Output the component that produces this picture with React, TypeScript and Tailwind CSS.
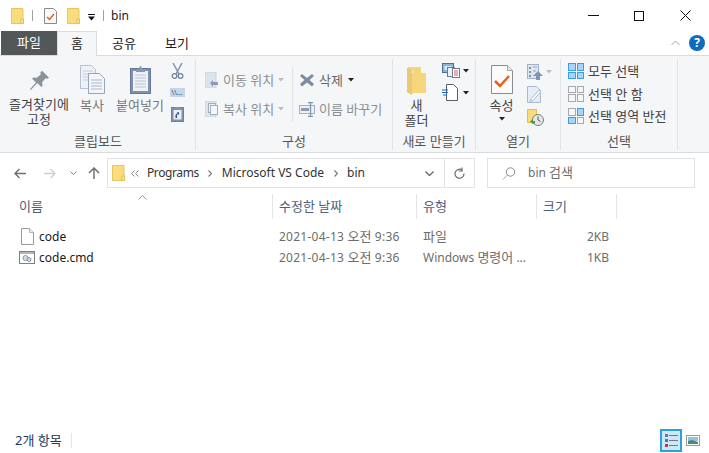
import React from 'react';

const FolderIcon = ({ className = '' }: { className?: string }) => (
  <svg className={className} width="13" height="16" viewBox="0 0 13 16">
    <path d="M.5.5h11.500v15H.5z" fill="#fbdc7c" stroke="#e8c65f" />
    <path d="M10 11h2.500v4.500H10z" fill="#fbe9a8" stroke="#e3bb4c" />
  </svg>
);

const TinyCaret = ({ muted = false }: { muted?: boolean }) => (
  <svg width="6" height="4" viewBox="0 0 6 4" className="shrink-0">
    <path d="M0 0h6L3 3.500z" fill={muted ? '#b9bcc0' : '#222'} />
  </svg>
);

const Crumb = ({ className = '' }: { className?: string }) => (
  <svg className={className} width="4" height="7" viewBox="0 0 4 7" fill="none">
    <path d="M.5.500l3 3-3 3" stroke="#777" strokeWidth="1.200" />
  </svg>
);

const PinIcon = () => (
  <svg width="21" height="20" viewBox="0 0 24 23">
    <path d="M15 1l8 8-2 1-2-.5-4 4.500.5 4-1.500 1.500-4.500-4.500L2 23l-1-1 7-7.500L3.500 10 5 8.500l4 .5 4.500-4L13 3z" fill="#8a939d" />
  </svg>
);

const CopyIcon = () => (
  <svg width="25" height="29" viewBox="0 0 25 29">
    <path d="M.5.5h11l4 4v19H.5z" fill="#eef1f6" stroke="#b5c0d0" />
    <path d="M3 6h10M3 9h10M3 12h10M3 15h10" stroke="#c4cedc" />
    <path d="M8.500 8.500h11l5 5v15h-16z" fill="#f4f6fa" stroke="#94a4bb" />
    <path d="M11 15h11M11 18h11M11 21h11M11 24h11" stroke="#a9b7ca" />
  </svg>
);

const PasteIcon = () => (
  <svg width="21" height="29" viewBox="0 0 21 29">
    <rect x=".5" y="3.500" width="20" height="25" fill="#7f92ad" stroke="#64779a" />
    <rect x="3" y="6" width="15" height="20" fill="#eef1f6" />
    <path d="M5 10h11M5 13h11M5 16h11M5 19h11M5 22h11" stroke="#bac6d6" />
    <path d="M6 4h3l1-3h1l1 3h3v3H6z" fill="#8798b2" />
  </svg>
);

const ScissorsIcon = () => (
  <svg width="13" height="16" viewBox="0 0 13 16" fill="none">
    <path d="M2 0l6 11M11 0L5 11" stroke="#7d8ea8" strokeWidth="1.400" />
    <circle cx="3.500" cy="13" r="2.300" stroke="#72849f" strokeWidth="1.300" />
    <circle cx="9.500" cy="13" r="2.300" stroke="#72849f" strokeWidth="1.300" />
  </svg>
);

const PathIcon = () => (
  <div className="flex h-[9px] w-[15px] items-center justify-center bg-[#c6d4e8] text-[7px] leading-none text-[#44556f]">\\...</div>
);

const ShortcutIcon = () => (
  <svg width="13" height="16" viewBox="0 0 13 16">
    <rect x=".5" y="1.500" width="12" height="14" fill="#8092ad" stroke="#6f819c" />
    <rect x="2.500" y="4" width="8" height="9.500" fill="#e9eef5" />
    <path d="M4 1h5v2H4z" fill="#8092ad" />
    <path d="M4.500 12V9l2-2H5l3-1v3L7 8l-1 1v3z" fill="#33517a" />
  </svg>
);

const MoveIcon = ({ copy = false }: { copy?: boolean }) => (
  <svg width="14" height="16" viewBox="0 0 14 16">
    <rect x="0" y="0" width="11" height="16" fill="#dbe3ee" stroke="#c8d3e2" />
    {copy ? (
      <>
        <rect x="3.500" y="2.500" width="7" height="9" fill="#eef2f7" stroke="#a3afc0" />
        <rect x="5.500" y="4.500" width="7" height="9" fill="#f5f7fa" stroke="#a3afc0" />
      </>
    ) : (
      <path d="M5 11l3-3v2h5v3H8v2z" fill="#8b9cb4" />
    )}
  </svg>
);

const DeleteIcon = () => (
  <svg width="14" height="14" viewBox="0 0 14 14">
    <path d="M2 1l5 4 5-4 2 2-4.500 4L14 11l-2 2.500L7 9.500l-5 4L0 11l4.500-4L0 3z" fill="#7c8ca3" />
  </svg>
);

const RenameIcon = () => (
  <svg width="16" height="15" viewBox="0 0 16 15" fill="none">
    <rect x=".5" y="3.500" width="15" height="8" fill="#edf0f5" stroke="#a4b0c2" />
    <rect x="2" y="6" width="8" height="3" fill="#8c9bb2" />
    <path d="M9 .5h5M9 14.500h5M11.500 1v13" stroke="#8293ac" strokeWidth="1.300" />
  </svg>
);

const NewFolderIcon = () => (
  <svg width="20" height="28" viewBox="0 0 20 28">
    <path d="M0 1l5 2v25l-5-3z" fill="#e7c066" />
    <path d="M1 0h13v18h5v4H6V4L1 1z" fill="#f6d67c" />
    <path d="M5 6h14v20H5z" fill="#f6d67c" />
    <path d="M5 3v25L0 25V1z" fill="#ecc873" />
  </svg>
);

const NewItemIcon = () => (
  <svg width="18" height="15" viewBox="0 0 18 15">
    <rect x=".5" y=".5" width="11" height="9" fill="#8bb4dd" stroke="#4d6f98" />
    <rect x="2.500" y="3" width="7" height="4" fill="#dbe9f6" />
    <rect x="5.500" y="4.500" width="7" height="9" fill="#eef1f5" stroke="#6d7b8e" />
    <rect x="10.500" y="5.500" width="7" height="9" fill="#fff" stroke="#6d7b8e" />
    <path d="M12 8h4M12 10h4M12 12h4" stroke="#d65a5a" />
  </svg>
);

const EasyAccessIcon = () => (
  <svg width="16" height="17" viewBox="0 0 16 17" fill="none">
    <path d="M4.500.5h7l4 4v12h-11z" fill="#fff" stroke="#55606d" />
    <path d="M0 6h6M0 8.500h6M1 11h4" stroke="#1d66c4" strokeWidth="1.200" />
  </svg>
);

const PropsIcon = () => (
  <svg width="22" height="29" viewBox="0 0 22 29">
    <path d="M.5.5h16l5 5v23H.500z" fill="#fbfbfb" stroke="#8c8c8c" />
    <path d="M16.500.5v5h5" fill="#e8e8e8" stroke="#a4a4a4" />
    <path d="M4 16l5 5 9-10" fill="none" stroke="#e8601c" strokeWidth="2.500" />
  </svg>
);

const OpenIcon = () => (
  <svg width="16" height="16" viewBox="0 0 16 16">
    <rect x=".5" y=".5" width="11" height="14" fill="#dfe6f0" stroke="#a3b1c4" />
    <path d="M2 3h2v2H2zM2 7h2v2H2zM2 11h2v2H2z" fill="#7d8ea6" />
    <path d="M6 3h4M6 7h3" stroke="#93a2b7" />
    <path d="M11 7l5 5h-3v4H9v-4H6z" fill="#7e96b3" />
  </svg>
);

const EditIcon = () => (
  <svg width="15" height="17" viewBox="0 0 15 17">
    <path d="M.5.5h9l4 4v12H.500z" fill="#e6edf6" stroke="#a9bad0" />
    <path d="M4 13l8-9 2 1.500-8 9-3 1z" fill="#fff" stroke="#a9bad0" />
  </svg>
);

const HistoryIcon = () => (
  <svg width="17" height="17" viewBox="0 0 17 17">
    <path d="M.5.5h9v13h-9z" fill="#fbdc7c" stroke="#e0bd57" />
    <circle cx="11" cy="11" r="5.500" fill="#e5e8ea" stroke="#7c7f82" />
    <path d="M11 7.500V11l2.500 1.500" fill="none" stroke="#555" />
    <path d="M6 10l-3 2.500L6 15z" fill="#3da33b" />
    <path d="M5 12h3v2.500H5z" fill="#3da33b" />
  </svg>
);

const SelectGrid = ({ on }: { on: boolean[] }) => (
  <div className="grid h-4 w-4 grid-cols-2 gap-px">
    {on.map((v, i) => (
      <div key={i} className={v ? 'border border-[#3a9ee4] bg-[#a8d4f5]' : 'border border-[#a9a9a9] bg-[#f5f6f7]'} />
    ))}
  </div>
);

const RibbonGroup = ({ label, width, children }: { label: string; width: string; children: React.ReactNode }) => (
  <div className={`flex h-[91px] flex-col border-r border-[#e1e3e6] ${width}`}>
    <div className="flex h-[74px] min-h-0">{children}</div>
    <div className="text-center text-[13px] leading-[17px] text-[#555]">{label}</div>
  </div>
);

const ColumnHead = ({ label, width }: { label: string; width: string }) => (
  <div className={`h-[25px] border-r border-[#e5e5e5] pl-[6px] text-[13px] leading-[25px] text-[#4c607a] ${width}`}>{label}</div>
);

const FileRow = ({ icon, name, type, size }: { icon: React.ReactNode; name: string; type: React.ReactNode; size: string }) => (
  <div className="flex h-[21px] items-center text-xs text-[#6d6d6d]">
    <div className="flex w-[272px] items-center pl-5">
      <div className="flex w-[19px] justify-start">{icon}</div>
      <span className="text-[#1a1a1a]">{name}</span>
    </div>
    <div className="w-[144px] pl-[7px] tracking-[0.25px]">2021-04-13 <span className="text-[13px] tracking-normal">오전</span> 9:36</div>
    <div className="w-[120px] pl-[7px]">{type}</div>
    <div className="w-[73px] text-right">{size}</div>
  </div>
);

const App = () => {
  return (
    <div className="flex h-[453px] w-[709px] flex-col overflow-hidden bg-white font-['Noto_Sans','Noto_Sans_CJK_KR',sans-serif] text-xs">
      {/* Title bar */}
      <div className="flex h-[31px] items-center">
        <div className="flex items-center pl-[11px]">
          <FolderIcon />
          <div className="ml-[8px] h-[11px] w-px bg-[#a0a0a0]" />
          <svg className="ml-[11px]" width="13" height="16" viewBox="0 0 13 16">
            <path d="M.5.5h9l3 3v12H.500z" fill="#fafafa" stroke="#8a8a8a" />
            <path d="M3 9l2.500 2.500L10 6" fill="none" stroke="#e8601c" strokeWidth="1.500" />
          </svg>
          <FolderIcon className="ml-[10px]" />
          <svg className="ml-[8px] mt-[3px]" width="7" height="7" viewBox="0 0 7 7">
            <path d="M0 0h7v1H0zM0 2.500h7L3.500 6.500z" fill="#111" />
          </svg>
          <div className="ml-[8px] h-[11px] w-px bg-[#a0a0a0]" />
          <span className="ml-[7px] text-xs text-[#222]">bin</span>
        </div>
        <div className="ml-auto flex items-center">
          <svg className="mr-[35px]" width="11" height="11" viewBox="0 0 11 11"><path d="M0 5.500h11" stroke="#111" /></svg>
          <div className="mr-[36px] h-[10px] w-[10px] border border-[#111]" />
          <svg className="mr-[18px]" width="11" height="11" viewBox="0 0 11 11"><path d="M.5.500l10 10M10.500.500l-10 10" stroke="#111" /></svg>
        </div>
      </div>

      {/* Tabs */}
      <div className="relative z-10 flex h-[24px] text-[13px]">
        <div className="ml-px flex h-[24px] w-[56px] items-center justify-center bg-[#52575a] text-white">파일</div>
        <div className="flex h-[25px] w-[40px] items-center justify-center border border-b-0 border-[#dadbdc] bg-[#f5f6f7] text-[#222]">홈</div>
        <div className="ml-[15px] leading-[24px] text-[#222]">공유</div>
        <div className="ml-[29px] leading-[24px] text-[#222]">보기</div>
        <div className="ml-auto flex items-center pr-[4px]">
          <svg className="mr-[9px]" width="9" height="6" viewBox="0 0 9 6" fill="none"><path d="M.5 5l4-4 4 4" stroke="#a6a6a6" /></svg>
          <div className="flex h-4 w-4 items-center justify-center rounded-full bg-[#0f6cbd] text-xs font-bold leading-none text-white">?</div>
        </div>
      </div>

      {/* Ribbon */}
      <div className="flex h-[98px] items-start border-y border-[#dadbdc] bg-[#f5f6f7] pt-[3px] pl-px text-[13px]">
        <RibbonGroup label="클립보드" width="w-[195px]">
          <div className="flex w-[76px] flex-col items-center pt-[11px] leading-[15px] text-[#444]">
            <div className="mb-[7px] h-[20px]"><PinIcon /></div>
            <div>즐겨찾기에</div>
            <div>고정</div>
          </div>
          <div className="flex w-[30px] flex-col items-center pt-[6px] leading-[15px]">
            <div className="mb-[4px] h-[29px]"><CopyIcon /></div>
            <div className="text-[#777]">복사</div>
          </div>
          <div className="flex w-[66px] flex-col items-center pt-[6px] leading-[15px] text-[#777]">
            <div className="mb-[4px] h-[29px]"><PasteIcon /></div>
            <div>붙여넣기</div>
          </div>
          <div className="-ml-[4px] flex w-[16px] flex-col items-center gap-[9px] pt-[4px]">
            <ScissorsIcon />
            <PathIcon />
            <ShortcutIcon />
          </div>
        </RibbonGroup>

        <RibbonGroup label="구성" width="w-[197px]">
          <div className="flex w-[96px] flex-col gap-[13px] pt-[13px] pl-[9px] leading-4 text-[#8a8f96]">
            <div className="flex items-center gap-[4px]"><MoveIcon /><span>이동 위치</span><TinyCaret muted /></div>
            <div className="flex items-center gap-[4px]"><MoveIcon copy /><span>복사 위치</span><TinyCaret muted /></div>
          </div>
          <div className="mt-[8px] h-[55px] w-px bg-[#e1e3e6]" />
          <div className="flex flex-col gap-[13px] pt-[13px] pl-[7px] leading-4 text-[#666]">
            <div className="flex h-4 items-center gap-[5px]"><DeleteIcon /><span>삭제</span><TinyCaret /></div>
            <div className="-ml-px flex h-4 items-center gap-[4px] text-[#8a8f96]"><RenameIcon /><span>이름 바꾸기</span></div>
          </div>
        </RibbonGroup>

        <RibbonGroup label="새로 만들기" width="w-[83px]">
          <div className="flex w-[47px] flex-col items-center pt-[8px] leading-[15px] text-[#444]">
            <div className="mb-[3px] h-[28px]"><NewFolderIcon /></div>
            <div>새</div>
            <div>폴더</div>
          </div>
          <div className="flex flex-col gap-[6px] pt-[4px] pl-[2px]">
            <div className="flex items-center gap-[3px]"><NewItemIcon /><TinyCaret /></div>
            <div className="flex items-center gap-[5px]"><EasyAccessIcon /><TinyCaret /></div>
          </div>
        </RibbonGroup>

        <RibbonGroup label="열기" width="w-[85px]">
          <div className="flex w-[51px] flex-col items-center pt-[6px] leading-[15px] text-[#444]">
            <div className="mb-[4px] h-[29px]"><PropsIcon /></div>
            <div>속성</div>
            <div className="mt-[4px]"><TinyCaret /></div>
          </div>
          <div className="flex flex-col gap-[6px] pt-[5px]">
            <div className="flex items-center gap-[3px]"><OpenIcon /><TinyCaret muted /></div>
            <EditIcon />
            <HistoryIcon />
          </div>
        </RibbonGroup>

        <RibbonGroup label="선택" width="w-[117px]">
          <div className="flex flex-col gap-[6.500px] pt-[4px] pl-[7px] leading-4 text-[#444]">
            <div className="flex items-center gap-[4px]"><SelectGrid on={[true, true, true, true]} /><span>모두 선택</span></div>
            <div className="flex items-center gap-[4px]"><SelectGrid on={[false, false, false, false]} /><span>선택 안 함</span></div>
            <div className="flex items-center gap-[4px]"><SelectGrid on={[false, true, true, false]} /><span>선택 영역 반전</span></div>
          </div>
        </RibbonGroup>
      </div>

      {/* Address row */}
      <div className="flex h-[41px] items-start pt-[5px]">
        <div className="flex h-[30px] w-[107px] items-center text-[#8a8a8a]">
          <svg className="ml-[14px]" width="12" height="11" viewBox="0 0 12 11" fill="none"><path d="M12 5.500H1M5.500 1L1 5.500 5.500 10" stroke="#727272" strokeWidth="1.500" /></svg>
          <svg className="ml-[18px]" width="12" height="11" viewBox="0 0 12 11" fill="none"><path d="M0 5.500h11M6.500 1L11 5.500 6.500 10" stroke="#cfcfcf" strokeWidth="1.500" /></svg>
          <svg className="ml-[14px]" width="7" height="4" viewBox="0 0 7 4" fill="none"><path d="M.5.500l3 3 3-3" stroke="#8a8a8a" /></svg>
          <svg className="ml-[11px]" width="12" height="12" viewBox="0 0 12 12" fill="none"><path d="M6 12V1M1 6l5-5 5 5" stroke="#727272" strokeWidth="1.500" /></svg>
        </div>
        <div className="flex h-[30px] w-[368px] items-center border border-[#e3e3e3] pl-1 text-[#333]">
          <FolderIcon />
          <svg className="ml-[6px]" width="8" height="7" viewBox="0 0 8 7" fill="none"><path d="M3.500.5l-3 3 3 3M7.500.5l-3 3 3 3" stroke="#888" /></svg>
          <span className="ml-[8px] tracking-[-0.4px]">Programs</span>
          <Crumb className="ml-[9px]" />
          <span className="ml-[10px]">Microsoft VS Code</span>
          <Crumb className="ml-[10px]" />
          <span className="ml-[9px]">bin</span>
          <svg className="ml-auto mr-[10px]" width="9" height="5" viewBox="0 0 9 5" fill="none"><path d="M.5.500l4 4 4-4" stroke="#666" strokeWidth="1.300" /></svg>
          <div className="flex h-full w-[30px] items-center justify-center border-l border-[#e3e3e3]">
            <svg width="11" height="12" viewBox="0 0 11 12" fill="none"><path d="M8 3a4.500 4.500 0 1 0 2 3.500M8 .5V4H4.500" stroke="#6a6a6a" strokeWidth="1.200" /></svg>
          </div>
        </div>
        <div className="ml-[12px] flex h-[30px] w-[208px] items-center border border-[#e3e3e3] pl-[14px] text-[#6d6d6d]">
          <svg width="14" height="13" viewBox="0 0 14 13" fill="none"><circle cx="8.500" cy="5" r="4.200" stroke="#8a8a8a" /><path d="M5.500 8L1 12.500" stroke="#c49a7a" /></svg>
          <span className="ml-[12px]">bin <span className="text-[13px]">검색</span></span>
        </div>
      </div>

      {/* Column headers */}
      <div className="relative flex h-[25px] pl-[12px]">
        <div className="h-[25px] w-[261px] border-r border-[#e5e5e5] pl-[7px] text-[13px] leading-[25px] text-[#4c607a]">이름</div>
        <ColumnHead label="수정한 날짜" width="w-[144px]" />
        <ColumnHead label="유형" width="w-[120px]" />
        <ColumnHead label="크기" width="w-[80px]" />
        <svg className="absolute left-[138px] top-px" width="9" height="5" viewBox="0 0 9 5" fill="none"><path d="M.5 4.500l4-4 4 4" stroke="#9a9a9a" /></svg>
      </div>

      {/* Files */}
      <div className="flex-1 pt-[7px]">
        <FileRow
          name="code"
          type={<span className="text-[13px]">파일</span>}
          size="2KB"
          icon={<svg className="ml-px" width="13" height="17" viewBox="0 0 13 17"><path d="M.5.5h8l4 4v12H.500z" fill="#fff" stroke="#9a9a9a" /><path d="M8.500.5v4h4" fill="#eee" stroke="#b5b5b5" /></svg>}
        />
        <FileRow
          name="code.cmd"
          type={<>Windows <span className="text-[13px]">명령어</span> ...</>}
          size="1KB"
          icon={<svg className="-ml-px" width="16" height="13" viewBox="0 0 16 13"><rect x=".5" y=".5" width="15" height="12" fill="#fff" stroke="#7e7e7e" /><path d="M1 1h14v2H1z" fill="#b5b5b5" /><circle cx="6.500" cy="7" r="2.500" fill="#d8dde3" stroke="#8a94a0" /><circle cx="10" cy="8.500" r="2" fill="#cfd6de" stroke="#8a94a0" /></svg>}
        />
      </div>

      {/* Status bar */}
      <div className="flex h-[24px] items-center pb-[2px]">
        <div className="ml-[15px] w-[57px] border-r border-[#e5e5e5] text-[13px] leading-[15px] text-[#1e395b]">2개 항목</div>
        <div className="ml-auto mr-[9px] flex items-center">
          <div className="flex h-[23px] w-[22px] flex-col items-center justify-center gap-[2px] border-2 border-[#2ea0d8] bg-[#cce8f7]">
            <div className="flex items-center gap-px"><div className="h-[3px] w-[3px] bg-[#777]" /><div className="h-px w-[9px] bg-[#777]" /></div>
            <div className="flex items-center gap-px"><div className="h-[3px] w-[3px] bg-[#3a7bd5]" /><div className="h-px w-[9px] bg-[#777]" /></div>
            <div className="flex items-center gap-px"><div className="h-[3px] w-[3px] bg-[#c0392b]" /><div className="h-px w-[9px] bg-[#777]" /></div>
          </div>
          <svg className="ml-[4px]" width="14" height="11" viewBox="0 0 14 11"><rect x=".5" y=".5" width="13" height="10" fill="#fff" stroke="#9a9a9a" /><path d="M2 2h10v4H2z" fill="#8ec3e6" /><path d="M2 9V6l4-1 6 2v2z" fill="#4f8a6a" /></svg>
        </div>
      </div>
    </div>
  );
};

export default App;
